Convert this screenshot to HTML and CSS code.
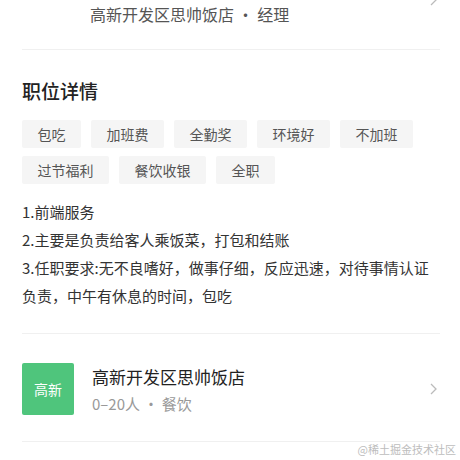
FILE: index.html
```html
<!DOCTYPE html>
<html lang="zh">
<head>
<meta charset="utf-8">
<link rel="stylesheet" href="styles.css">
</head>
<body>
<div class="page">
  <div class="row top-row">
    <div class="row-main">
      <div class="person-name">王先生</div>
      <div class="person-sub">高新开发区思帅饭店 · 经理</div>
    </div>
    <svg class="chev" viewBox="0 0 7 12" width="7" height="12"><path d="M1 1 L6 6 L1 11" fill="none" stroke="#bbb" stroke-width="1.3"/></svg>
  </div>

  <section class="detail">
    <h2 class="title">职位详情</h2>
    <div class="tags">
      <span class="tag">包吃</span>
      <span class="tag">加班费</span>
      <span class="tag">全勤奖</span>
      <span class="tag">环境好</span>
      <span class="tag">不加班</span>
      <span class="tag">过节福利</span>
      <span class="tag">餐饮收银</span>
      <span class="tag">全职</span>
    </div>
    <div class="desc">
      <p>1.前端服务</p>
      <p>2.主要是负责给客人乘饭菜，打包和结账</p>
      <p>3.任职要求:无不良嗜好，做事仔细，反应迅速，对待事情认证负责，中午有休息的时间，包吃</p>
    </div>
  </section>

  <div class="row company">
    <div class="logo">高新</div>
    <div class="row-main">
      <div class="co-name">高新开发区思帅饭店</div>
      <div class="co-sub">0–20人 · 餐饮</div>
    </div>
    <svg class="chev" viewBox="0 0 7 12" width="7" height="12"><path d="M1 1 L6 6 L1 11" fill="none" stroke="#bbb" stroke-width="1.3"/></svg>
  </div>
</div>
<div class="watermark">@稀土掘金技术社区</div>
</body>
</html>
```
FILE: styles.css
```css
* { box-sizing: border-box; }
html, body { margin: 0; padding: 0; background: #fff; }
body {
  font-family: "Noto Sans CJK SC", "Noto Sans", sans-serif;
  color: #333;
  width: 460px;
  height: 460px;
  overflow: hidden;
  position: relative;
}
.page { padding: 0 20px 0 22px; }
.row { display: flex; align-items: center; }
.row-main { flex: 1; min-width: 0; }
.chev { flex: none; margin-right: 3px; }

.top-row {
  margin-top: -25px;
  padding-bottom: 24px;
  border-bottom: 1px solid #f0f0f0;
}
.top-row .row-main { padding-left: 68px; }
.person-name { height: 28px; line-height: 28px; font-size: 18px; color: #222; visibility: hidden; }
.person-sub { line-height: 22px; font-size: 16px; color: #555; }

.detail { padding: 27px 0 23px; border-bottom: 1px solid #f0f0f0; }
.title { margin: 0; font-size: 19px; line-height: 28px; font-weight: 500; color: #222; }
.tags { display: flex; flex-wrap: wrap; gap: 8px 10px; margin-top: 15px; }
.tag {
  height: 28px; line-height: 28px; padding: 0 15.5px;
  background: #f5f5f5; color: #555; font-size: 14px; border-radius: 2px;
}
.desc { margin-top: 14px; font-size: 15px; line-height: 28px; color: #333; }
.desc p { margin: 0; }

.company { padding: 29px 0 26px; border-bottom: 1px solid #f0f0f0; }
.logo {
  flex: none; width: 52px; height: 52px; margin-right: 18px;
  background: #4fc57c; color: #fff; font-size: 14px; border-radius: 2px;
  display: flex; align-items: center; justify-content: center;
}
.co-name { font-size: 17px; line-height: 26px; color: #222; }
.co-sub { margin-top: 3px; font-size: 15px; line-height: 22px; color: #999; }

.watermark {
  position: absolute; right: 4px; bottom: 3px;
  font-size: 11px; line-height: 16px; color: #bdbdbd;
  font-family: "Noto Sans CJK SC", serif;
}
```
